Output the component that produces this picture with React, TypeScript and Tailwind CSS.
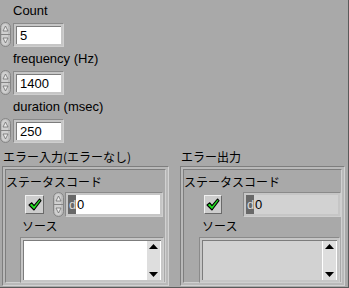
import React from "react";

const latin = { fontFamily: '"Liberation Sans", Arial, sans-serif' };
const jp = { fontFamily: '"Noto Sans CJK JP", sans-serif' };

const Spinner = () => (
  <svg width="11" height="25" viewBox="0 0 11 25" className="shrink-0">
    <rect x="0.5" y="0.5" width="10" height="24" rx="5" fill="#bdbdbd" stroke="#858585" />
    <rect x="2" y="2" width="6" height="21" rx="3" fill="#d0d0d0" />
    <line x1="1" y1="12.5" x2="10" y2="12.5" stroke="#858585" />
    <path d="M5.5 4 L8 9 L3 9 Z" fill="#ececec" stroke="#6e6e6e" strokeWidth="0.8" />
    <path d="M5.5 21 L8 16 L3 16 Z" fill="#ececec" stroke="#6e6e6e" strokeWidth="0.8" />
  </svg>
);

const NumBox = ({ value }: { value: string }) => (
  <div className="flex items-center gap-[2px]">
    <Spinner />
    <div className="w-[51px] h-[24px] border border-t-[#8a8a8a] border-l-[#8a8a8a] border-r-[#cfcfcf] border-b-[#cfcfcf] bg-[#c6c6c6] p-[2px]">
      <div className="h-full bg-white border-t border-l border-[#7c7c7c] pl-[3px] text-[13px] leading-[17px] text-black" style={latin}>
        {value}
      </div>
    </div>
  </div>
);

const CheckButton = () => (
  <div className="w-[19px] h-[19px] bg-[#cdcdcd] border border-t-[#f0f0f0] border-l-[#f0f0f0] border-r-[#6a6a6a] border-b-[#6a6a6a] flex items-center justify-center">
    <svg width="14" height="13" viewBox="0 0 14 13">
      <path d="M1 7 L3.8 4.8 L6 7.6 L11.5 1 L13 2.6 L6 12 Z" fill="#22e022" stroke="#000" strokeWidth="1.1" strokeLinejoin="round" />
    </svg>
  </div>
);

const Radix = ({ fill, spinner, width }: { fill: string; spinner?: boolean; width: string }) => (
  <div className="flex items-center gap-[1px]">
    {spinner && <Spinner />}
    <div className={`${width} h-[25px] border border-t-[#8a8a8a] border-l-[#8a8a8a] border-r-[#cfcfcf] border-b-[#cfcfcf] bg-[#c6c6c6] p-[2px] flex`}>
      <div className="w-[8px] bg-[#686868] text-[#d8d8d8] text-[13px] leading-[19px] pl-[1px]" style={latin}>d</div>
      <div className={`flex-1 ${fill} pl-[1px] text-[13px] leading-[19px] text-black`} style={latin}>0</div>
    </div>
  </div>
);

const SourceBox = ({ fill, width }: { fill: string; width: string }) => (
  <div className={`${width} h-[46px] border border-t-[#8a8a8a] border-l-[#8a8a8a] border-r-[#cfcfcf] border-b-[#cfcfcf] bg-[#c6c6c6] p-[2px]`}>
    <div className={`h-full flex ${fill} border-t border-l border-[#7c7c7c]`}>
      <div className="flex-1" />
      <div className="w-[15px] bg-[#dedede] border-l border-r border-white flex flex-col justify-between items-center py-[3px]">
        <svg width="9" height="5" viewBox="0 0 9 5"><path d="M4.5 0 L9 5 L0 5 Z" fill="#000" /></svg>
        <svg width="9" height="5" viewBox="0 0 9 5"><path d="M0 0 L9 0 L4.5 5 Z" fill="#000" /></svg>
      </div>
    </div>
  </div>
);

const Cluster = ({ title, out }: { title: string; out?: boolean }) => {
  const fill = out ? "bg-[#d2d2d2]" : "bg-white";
  return (
    <div className="flex flex-col">
      <div className="text-[12px] leading-[16px] h-[17px] text-black pl-[1px]" style={jp}>{title}</div>
      <div className="h-[120px] border border-t-[#7e7e7e] border-l-[#7e7e7e] border-r-[#d2d2d2] border-b-[#d2d2d2] bg-[#b9b9b9] p-[2px]">
        <div className="h-full bg-[#a9a9a9] border border-t-[#7e7e7e] border-l-[#7e7e7e] border-r-[#d0d0d0] border-b-[#d0d0d0] flex flex-col">
          <div className="text-[12px] leading-[16px] text-black pt-[4px]" style={jp}>ステータスコード</div>
          <div className={`flex items-center mt-[2px] ${out ? "pl-[20px] gap-[21px]" : "pl-[19px] gap-[9px]"}`}>
            <CheckButton />
            <Radix fill={fill} spinner={!out} width={out ? "w-[98px]" : "w-[98px]"} />
          </div>
          <div className={`text-[12px] leading-[16px] text-black mt-[1px] ${out ? "pl-[18px]" : "pl-[16px]"}`} style={jp}>ソース</div>
          <div className={`mt-[3px] ${out ? "pl-[15px]" : "pl-[14px]"}`}>
            <SourceBox fill={fill} width={out ? "w-[141px]" : "w-[144px]"} />
          </div>
        </div>
      </div>
    </div>
  );
};

export default function App() {
  return (
    <div className="w-[349px] h-[288px] bg-[#a9a9a9] border-r border-b border-[#5a5a5a] overflow-hidden flex flex-col">
      <div className="flex flex-col pt-[3px]">
        {[
          ["Count", "5"],
          ["frequency (Hz)", "1400"],
          ["duration (msec)", "250"],
        ].map(([label, value]) => (
          <div key={label} className="flex flex-col h-[48px]">
            <div className="pl-[13px] text-[13px] leading-[16px] h-[19px] text-black" style={latin}>{label}</div>
            <NumBox value={value} />
          </div>
        ))}
      </div>
      <div className="flex gap-[11px] pl-[2px] mt-[2px]">
        <div className="w-[167px]">
          <Cluster title="エラー入力(エラーなし)" />
        </div>
        <div className="w-[165px]">
          <Cluster title="エラー出力" out />
        </div>
      </div>
    </div>
  );
}
